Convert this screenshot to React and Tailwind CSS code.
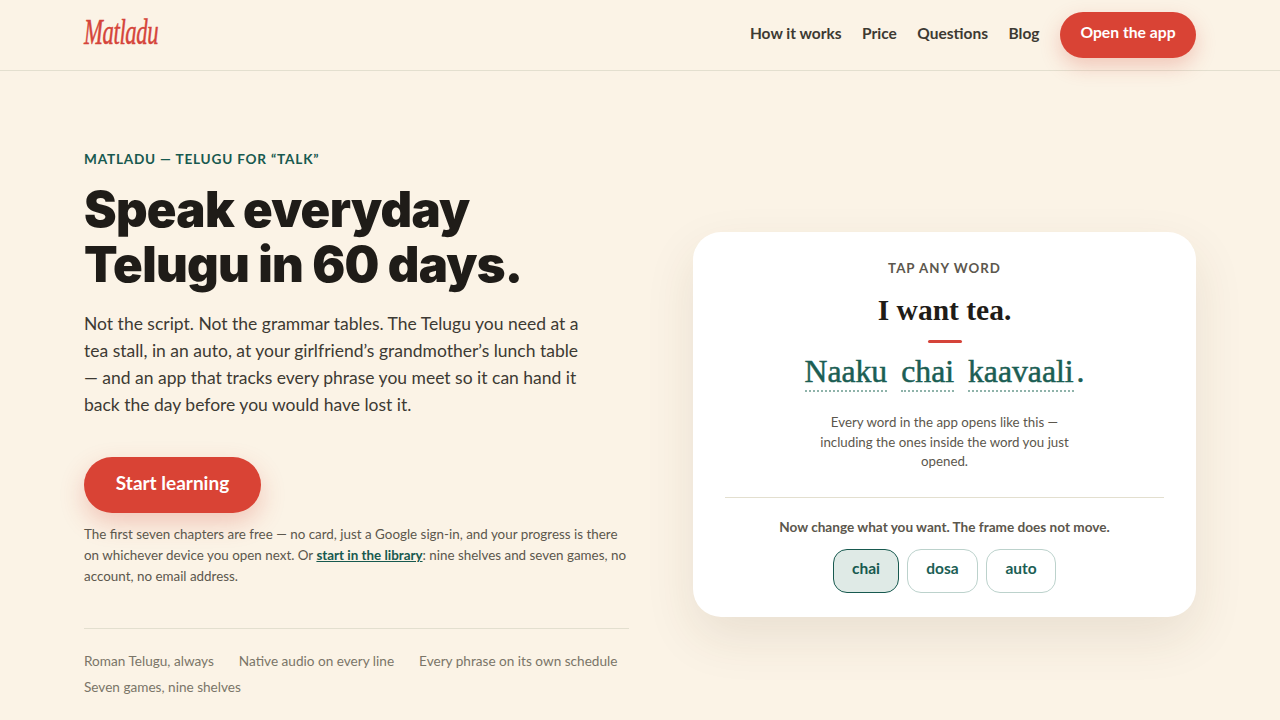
const sans = "font-['Lato',sans-serif]";
const serif = "font-['Liberation_Serif',serif]";

const navLinks = ['How it works', 'Price', 'Questions', 'Blog'];
const features = ['Roman Telugu, always', 'Native audio on every line', 'Every phrase on its own schedule', 'Seven games, nine shelves'];
const words = ['Naaku', 'chai', 'kaavaali'];

const Header = () => (
    <header className="h-[71px] border-b border-[#e3dfcf] px-[84px] flex items-center justify-between">
        <a className={`${serif} -mt-[6px] italic text-[36px] leading-none text-[#d5443a] tracking-[-0.6px] inline-block origin-left scale-x-[0.63] [-webkit-text-stroke:0.5px_#d5443a]`}>Matladu</a>
        <nav className="flex items-center gap-[20.5px]">
            {navLinks.map(link => (
                <a key={link} className="text-[15.5px] leading-[26px] -mt-[5px] font-bold text-[#3d3a33]">{link}</a>
            ))}
            <button className="h-[46px] w-[136px] pb-[5px] rounded-full bg-[#d94335] text-white text-[15.7px] font-bold shadow-[0_8px_20px_rgba(217,67,53,0.25)]">
                Open the app
            </button>
        </nav>
    </header>
);

const Hero = () => (
    <div className="w-[545px]">
        <p className="-mt-[1px] text-[13.6px] leading-[18px] font-bold tracking-[0.8px] text-[#17594f]">MATLADU — TELUGU FOR “TALK”</p>
        <h1 className="mt-[14px] font-['Inter',sans-serif] text-[49px] leading-[55px] font-black tracking-[-0.7px] text-[#1f1c18]">
            Speak everyday<br />Telugu in 60 days.
        </h1>
        <p className="mt-[18px] w-[510px] text-[17.5px] leading-[27px] text-[#3d3a33]">
            Not the script. Not the grammar tables. The Telugu you need at a tea stall, in an auto, at your girlfriend’s grandmother’s lunch table — and an app that tracks every phrase you meet so it can hand it back the day before you would have lost it.
        </p>
        <button className="mt-[39px] h-[56px] w-[177px] pb-[3px] rounded-full bg-[#d94335] text-white text-[19px] font-bold shadow-[0_10px_24px_rgba(217,67,53,0.25)]">
            Start learning
        </button>
        <p className="mt-[11px] text-[13.4px] leading-[21px] text-[#5c574d]">
            The first seven chapters are free — no card, just a Google sign-in, and your progress is there on whichever device you open next. Or <a className="font-bold text-[#17594f] underline">start in the library</a>: nine shelves and seven games, no account, no email address.
        </p>
        <div className="mt-[41px] border-t border-[#e3dfcf] pt-[23px] flex flex-wrap gap-x-[25px] gap-y-2 text-[13.6px] leading-[18px] text-[#7a7568]">
            {features.map(f => <span key={f}>{f}</span>)}
        </div>
    </div>
);

const Card = () => (
    <div className="w-[503px] h-[385px] rounded-[28px] bg-white px-8 pt-7 shadow-[0_20px_50px_rgba(80,60,30,0.10)] flex flex-col items-center">
        <p className="text-[13.3px] leading-4 font-bold tracking-[1px] text-[#5c574d]">TAP ANY WORD</p>
        <h2 className={`mt-[16px] ${serif} text-[29.5px] leading-[36px] font-bold text-[#1f1c18]`}>I want tea.</h2>
        <div className="mt-[12px] h-[3px] w-[34px] rounded-full bg-[#d5443a]" />
        <p className={`mt-[11px] flex gap-[14px] ${serif} text-[31.7px] leading-[36px] text-[#1b5e54] [-webkit-text-stroke:0.5px_#1b5e54]`}>
            {words.map(w => (
                <span key={w} className="border-b-2 border-dotted border-[#8fb3aa]">{w}</span>
            ))}
            <span className="-ml-[11px]">.</span>
        </p>
        <p className="mt-[21px] w-[270px] text-center text-[13.3px] leading-[19.5px] text-[#5c574d]">
            Every word in the app opens like this — including the ones inside the word you just opened.
        </p>
        <div className="mt-[25px] w-full border-t border-[#e3dfcf]" />
        <p className="mt-[19px] text-[13.6px] leading-[20px] font-bold text-[#5c574d]">Now change what you want. The frame does not move.</p>
        <div className="mt-[12px] flex gap-2">
            <button className="h-[44px] w-[66px] pb-[4px] rounded-[14px] border border-[#17594f] bg-[#dfeae6] text-[15.5px] font-bold text-[#17594f]">chai</button>
            <button className="h-[44px] w-[71px] pb-[4px] rounded-[14px] border border-[#bcd2cc] text-[15.5px] font-bold text-[#1b5e54]">dosa</button>
            <button className="h-[44px] w-[70px] pb-[4px] rounded-[14px] border border-[#bcd2cc] text-[15.5px] font-bold text-[#1b5e54]">auto</button>
        </div>
    </div>
);

const App = () => (
    <div className={`${sans} h-[720px] overflow-hidden bg-[#fbf3e6]`}>
        <Header />
        <main className="px-[84px] pt-[80px] flex justify-between items-start">
            <Hero />
            <div className="pt-[81px]"><Card /></div>
        </main>
    </div>
);

export default App;
